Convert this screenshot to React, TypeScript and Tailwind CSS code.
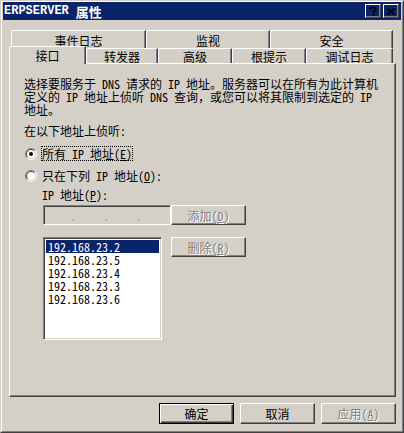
import type { ReactNode } from "react";

const F = "font-['Noto_Sans_Mono_CJK_SC','Noto_Sans_CJK_SC',sans-serif]";

const raised =
  "border border-t-white border-l-white border-r-[#404040] border-b-[#404040] shadow-[inset_-1px_-1px_#808080]";
const sunken =
  "border border-t-[#808080] border-l-[#808080] border-r-white border-b-white shadow-[inset_1px_1px_#404040,inset_-1px_-1px_#d4d0c8]";
const disabledText = "text-[#808080] [text-shadow:1px_1px_0_#fff]";

function Radio({ checked }: { checked?: boolean }) {
  return (
    <svg width={12} height={12} viewBox="0 0 12 12" className="shrink-0">
      <circle cx={6} cy={6} r={5} fill="#fff" />
      <path d="M2.1 9.9A5.5 5.5 0 0 1 9.9 2.1" stroke="#808080" fill="none" />
      <path d="M9.9 2.1A5.5 5.5 0 0 1 2.1 9.9" stroke="#fff" fill="none" />
      <path d="M2.8 9.2A4.5 4.5 0 0 1 9.2 2.8" stroke="#404040" fill="none" />
      <path d="M9.2 2.8A4.5 4.5 0 0 1 2.8 9.2" stroke="#d4d0c8" fill="none" />
      {checked && <circle cx={6} cy={6} r={2} fill="#000" />}
    </svg>
  );
}

function Tab({ className, children }: { className: string; children: ReactNode }) {
  return (
    <div
      className={`flex justify-center border-t border-l border-r border-t-white border-l-white border-r-[#404040] shadow-[inset_-1px_0_#808080] rounded-tl-[2px] ${className}`}
    >
      {children}
    </div>
  );
}

function Button({
  children,
  disabled,
  isDefault,
  className = "",
}: {
  children: ReactNode;
  disabled?: boolean;
  isDefault?: boolean;
  className?: string;
}) {
  const frame = isDefault
    ? "border border-black shadow-[inset_1px_1px_#fff,inset_-1px_-1px_#404040,inset_-2px_-2px_#808080]"
    : raised;
  return (
    <div
      className={`flex items-center justify-center shrink-0 ${frame} ${
        disabled ? disabledText : "text-black"
      } ${className}`}
    >
      {children}
    </div>
  );
}

const ips = ["192.168.23.2", "192.168.23.5", "192.168.23.4", "192.168.23.3", "192.168.23.6"];

export default function App() {
  return (
    <div
      className={`w-[404px] h-[433px] border border-t-[#d4d0c8] border-l-[#d4d0c8] border-r-[#404040] border-b-[#404040] bg-[#d4d0c8] ${F} text-[12px] leading-[13px] text-black`}
    >
      <div className="h-full flex flex-col border border-t-white border-l-white border-r-[#808080] border-b-[#808080] px-px pb-px">
        {/* Caption */}
        <div className="h-[18px] shrink-0 bg-[#0a246a] flex items-center pl-px pr-[2px] text-white font-bold">
          <span className="font-['Liberation_Mono',monospace] text-[12px]">ERPSERVER</span>
          <span className="ml-[7px] text-[13px]">属性</span>
          <div className="ml-auto flex gap-[2px]">
            <div className={`w-[16px] h-[14px] ${raised} flex items-center justify-center`}>
              <svg width={8} height={9} viewBox="0 0 8 9">
                <path d="M1 2.5V1.5L2 0.5H5.5L6.5 1.5V3L4.5 4.5V6" stroke="#000" strokeWidth={1.8} fill="none" />
                <rect x={3.5} y={7} width={2} height={2} fill="#000" />
              </svg>
            </div>
            <div className={`w-[16px] h-[14px] ${raised} flex items-center justify-center`}>
              <svg width={8} height={7} viewBox="0 0 8 7">
                <path d="M0.5 0.5L7.5 6.5M7.5 0.5L0.5 6.5" stroke="#000" strokeWidth={1.8} />
              </svg>
            </div>
          </div>
        </div>

        {/* Tab strip, back row */}
        <div className="mt-[10px] ml-[8px] flex h-[18px]">
          <Tab className="w-[135px] pt-[3px]">事件日志</Tab>
          <Tab className="w-[124px] pt-[3px]">监视</Tab>
          <Tab className="w-[123px] pt-[3px]">安全</Tab>
        </div>
        {/* Tab strip, front row */}
        <div className="ml-[6px] flex items-start h-[15px]">
          <Tab className="relative z-10 w-[77px] h-[18px] -mt-[2px] pt-[2px] bg-[#d4d0c8]">接口</Tab>
          <Tab className="w-[72px] h-[15px] pt-[1px]">转发器</Tab>
          <Tab className="w-[74px] h-[15px] pt-[1px]">高级</Tab>
          <Tab className="w-[74px] h-[15px] pt-[1px]">根提示</Tab>
          <Tab className="w-[87px] h-[15px] pt-[1px]">调试日志</Tab>
        </div>

        {/* Page */}
        <div className={`ml-[6px] w-[387px] h-[334px] shrink-0 ${raised} pl-[14px] pt-[13px] flex flex-col`}>
          <p className="whitespace-nowrap">
            选择要服务于 DNS 请求的 IP 地址。服务器可以在所有为此计算机
            <br />
            定义的 IP 地址上侦听 DNS 查询，或您可以将其限制到选定的 IP
            <br />
            地址。
          </p>
          <div className="mt-[8px]">在以下地址上侦听:</div>

          <div className="mt-[9px] flex items-center h-[15px]">
            <span className="ml-px">
              <Radio checked />
            </span>
            <span className="ml-[4px] h-[15px] border border-dotted border-black">
              所有 IP 地址(<u>E</u>)
            </span>
          </div>
          <div className="mt-[7px] flex items-center h-[15px]">
            <span className="ml-px">
              <Radio />
            </span>
            <span className="ml-[4px] h-[15px] border border-transparent">
              只在下列 IP 地址(<u>O</u>):
            </span>
          </div>

          <div className="mt-[5px] ml-[18px]">
            IP 地址(<u>P</u>):
          </div>

          <div className="mt-[4px] ml-[19px] flex">
            <div className={`w-[128px] h-[20px] ${sunken} flex items-center pl-[26px] text-[#a0a0a0]`}>
              <span className="w-[33px]">.</span>
              <span className="w-[33px]">.</span>
              <span className="w-[33px]">.</span>
            </div>
            <Button disabled className="w-[75px] h-[20px]">
              添加(<u>D</u>)
            </Button>
          </div>

          <div className="mt-[12px] ml-[19px] flex items-start">
            <div className={`w-[119px] h-[103px] ${sunken} bg-white p-[2px]`}>
              {ips.map((ip, i) => (
                <div
                  key={ip}
                  className={`h-[13px] pl-[2px] whitespace-nowrap ${
                    i === 0 ? "bg-[#0a246a] text-white" : "text-black"
                  }`}
                >
                  {ip}
                </div>
              ))}
            </div>
            <Button disabled className="ml-[9px] w-[75px] h-[20px]">
              删除(<u>R</u>)
            </Button>
          </div>
        </div>

        {/* Dialog buttons */}
        <div className="mt-[6px] flex justify-end gap-[6px] pr-[5px]">
          <Button isDefault className="w-[75px] h-[21px]">
            确定
          </Button>
          <Button className="w-[75px] h-[21px]">取消</Button>
          <Button disabled className="w-[75px] h-[21px]">
            应用(<u>A</u>)
          </Button>
        </div>
      </div>
    </div>
  );
}
